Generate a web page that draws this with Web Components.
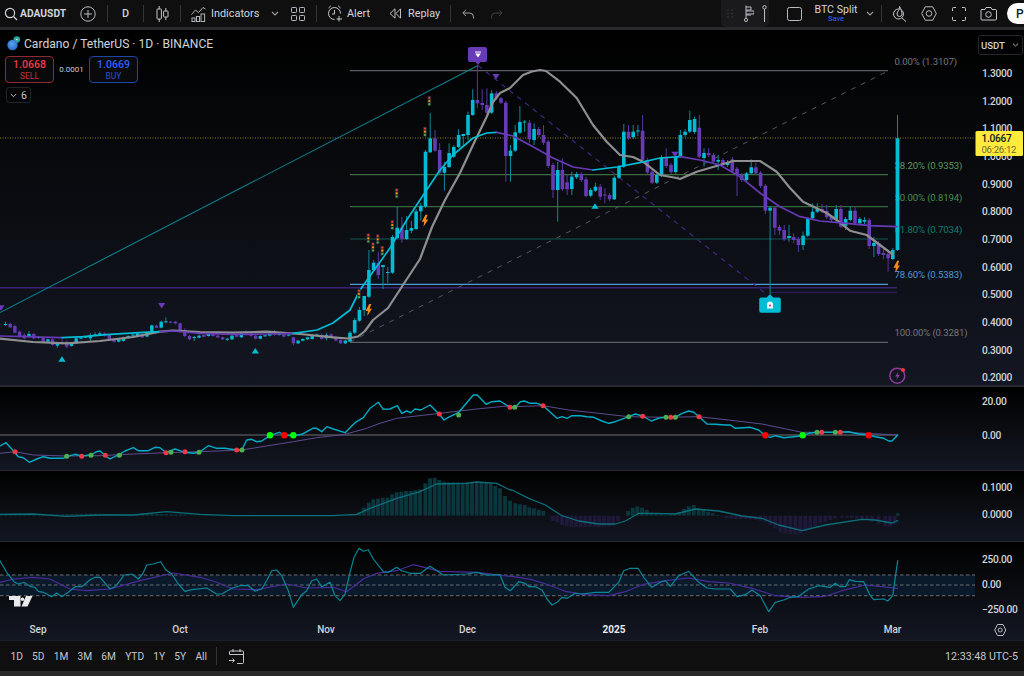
<!DOCTYPE html>
<html><head><meta charset="utf-8"><title>ADAUSDT</title>
<style>
html,body{margin:0;padding:0;background:#000;overflow:hidden;width:1024px;height:676px}
body{font-family:Roboto,"Liberation Sans",sans-serif;color:#d1d4dc}
tv-tool svg,tv-chart-legend svg{display:block}
</style></head><body>
<tv-app>
  <tv-toolbar>
    <tv-tool w="75" pl="4" bold><svg width="14" height="14" viewBox="0 0 14 14" fill="none" stroke="#d1d4dc" stroke-width="1.2"><circle cx="6" cy="6" r="4.6"/><path d="M9.5 9.5 13 13"/></svg><span slot="label" style="margin-left:2px">ADAUSDT</span></tv-tool>
    <tv-tool w="26"><svg width="16" height="16" viewBox="0 0 16 16" fill="none" stroke="#b8bbc2" stroke-width="1"><circle cx="8" cy="8" r="7.2"/><path d="M8 4v8M4 8h8"/></svg></tv-tool>
    <tv-sep ml="6"></tv-sep>
    <tv-tool w="35"><span slot="label" style="margin:0;font-weight:500">D</span></tv-tool>
    <tv-sep></tv-sep>
    <tv-tool w="36"><svg width="13" height="16" viewBox="0 0 13 16" fill="none" stroke="#c4c7ce" stroke-width="1"><path d="M3.2 0v3M3.2 13v3M9.8 2v3M9.8 11v3"/><rect x="1" y="3" width="4.4" height="10" rx=".6"/><rect x="7.6" y="5" width="4.4" height="6" rx=".6"/></svg></tv-tool>
    <tv-sep></tv-sep>
    <tv-tool w="84" pl="10"><svg width="15" height="16" viewBox="0 0 15 16" fill="none" stroke="#b0b3ba" stroke-width="1"><path d="M.5 8.5 4.5 4 7.5 6.5 12 1.5 14.5 3"/><rect x="1" y="12" width="3" height="3.5"/><rect x="5.5" y="10.5" width="3" height="5"/><rect x="10" y="8" width="3.6" height="7.5"/></svg><span slot="label">Indicators</span></tv-tool>
    <tv-tool w="20"><svg width="8" height="5" viewBox="0 0 8 5" fill="none" stroke="#9a9da5" stroke-width="1.1"><path d="M1 1l3 3 3-3"/></svg></tv-tool>
    <tv-tool w="26"><svg width="14" height="14" viewBox="0 0 14 14" fill="none" stroke="#b8bbc2" stroke-width="1"><rect x=".5" y=".5" width="5" height="5" rx=".8"/><rect x="8.5" y=".5" width="5" height="5" rx=".8"/><rect x=".5" y="8.5" width="5" height="5" rx=".8"/><rect x="8.5" y="8.5" width="5" height="5" rx=".8"/></svg></tv-tool>
    <tv-sep ml="5"></tv-sep>
    <tv-tool w="60" pl="10"><svg width="16" height="17" viewBox="0 0 16 17" fill="none" stroke="#c4c7ce" stroke-width="1"><path d="M7.5 14.5A6 6 0 1 1 13.5 8.5"/><path d="M7.5 5v4H5M1.5 3 3.8 .8M13.5 3 11.2 .8M12 11v5.500M9.500 14H15"/></svg><span slot="label" style="margin-left:4px">Alert</span></tv-tool>
    <tv-tool w="66" pl="12"><svg width="12" height="11" viewBox="0 0 12 11" fill="none" stroke="#b8bbc2" stroke-width="1"><path d="M6 .8 1 5.500 6 10.200ZM11.500 .8 7 5.500 11.500 10.200Z"/></svg><span slot="label" style="margin-left:7px">Replay</span></tv-tool>
    <tv-sep ml="7"></tv-sep>
    <tv-tool w="34"><svg width="12" height="10" viewBox="0 0 12 10" fill="none" stroke="#a0a3aa" stroke-width="1"><path d="M4 .8.8 4 4 7M1 4h6.500a4 4 0 0 1 4 4v1.500"/></svg></tv-tool>
    <tv-tool w="24"><svg width="12" height="10" viewBox="0 0 12 10" fill="none" stroke="#3e4046" stroke-width="1"><path d="M8 .8 11.200 4 8 7M11 4H4.500a4 4 0 0 0-4 4v1.500"/></svg></tv-tool>
    <tv-draw-panel>
      <svg width="6" height="9" viewBox="0 0 6 9" fill="#3b3d42"><circle cx="1" cy="1" r=".8"/><circle cx="5" cy="1" r=".8"/><circle cx="1" cy="4.500" r=".8"/><circle cx="5" cy="4.500" r=".8"/><circle cx="1" cy="8" r=".8"/><circle cx="5" cy="8" r=".8"/></svg>
      <svg width="10" height="17" viewBox="0 0 10 17" fill="none" stroke="#b8bbc2" stroke-width="1"><path d="M2 .5V13M2 2h5v3H2M2 6h8v3H2M2 10h5"/><circle cx="2" cy="15" r="1.600"/></svg>
      <svg width="5" height="17" viewBox="0 0 5 17" fill="none" stroke="#b8bbc2" stroke-width="1"><circle cx="2.500" cy="2.300" r="1.700"/><path d="M2.500 4v13"/></svg>
    </tv-draw-panel>
    <tv-tool w="33" pl="18"><svg width="15" height="14" viewBox="0 0 15 14" fill="none" stroke="#b8bbc2" stroke-width="1"><rect x=".5" y=".5" width="14" height="13" rx="2"/></svg></tv-tool>
    <tv-layout-name><span>BTC Split</span><span slot="sub">Save</span></tv-layout-name>
    <tv-tool w="22" pl="7"><svg width="8" height="5" viewBox="0 0 8 5" fill="none" stroke="#9a9da5" stroke-width="1.1"><path d="M1 1l3 3 3-3"/></svg></tv-tool>
    <tv-sep></tv-sep>
    <tv-tool w="34"><svg width="15" height="16" viewBox="0 0 15 16" fill="none" stroke="#c4c7ce" stroke-width="1"><circle cx="6.500" cy="8" r="5"/><path d="M10 12l4 3.500"/><path d="M7.500 .5C8.500 4 5 5 5 8a2.500 2.500 0 0 0 5 0C10 6 9 3 7.500 .5Z" fill="#0f0f0f"/></svg></tv-tool>
    <tv-tool w="26"><svg width="16" height="15" viewBox="0 0 16 15" fill="none" stroke="#b8bbc2" stroke-width="1"><path d="M4.300.8h7.400L15.300 7.500 11.700 14.200H4.300L.7 7.500Z"/><circle cx="8" cy="7.500" r="2.800"/></svg></tv-tool>
    <tv-tool w="34"><svg width="14" height="14" viewBox="0 0 14 14" fill="none" stroke="#c4c7ce" stroke-width="1"><path d="M.5 4V1.500a1 1 0 0 1 1-1H4M10 .5h2.500a1 1 0 0 1 1 1V4M13.500 10v2.500a1 1 0 0 1-1 1H10M4 13.500H1.500a1 1 0 0 1-1-1V10"/></svg></tv-tool>
    <tv-tool w="24"><svg width="17" height="14" viewBox="0 0 17 14" fill="none" stroke="#c4c7ce" stroke-width="1"><path d="M1.500 2.500h3.500l1-2h5l1 2h3.500a1 1 0 0 1 1 1v8.500a1 1 0 0 1-1 1h-13.500a1 1 0 0 1-1-1V3.500a1 1 0 0 1 1-1Z"/><circle cx="8.500" cy="7.500" r="2.800"/></svg></tv-tool>
    <tv-publish>Publish</tv-publish>
  </tv-toolbar>
  <tv-main-pane>
    <tv-chart-legend>
      <svg slot="logo" width="15" height="15" viewBox="0 0 15 15"><defs><radialGradient id="cg" cx=".45" cy=".4" r=".7"><stop offset="0" stop-color="#5aa6ef"/><stop offset="1" stop-color="#1f63c4"/></radialGradient></defs><circle cx="10.800" cy="3.600" r="3.300" fill="#26a69a"/><path d="M9.500 3.200 12 2.400 11 4.600Z" fill="#e8f6f4"/><circle cx="6.500" cy="9" r="5.200" fill="url(#cg)"/></svg>
      <span slot="title">Cardano / TetherUS · 1D · BINANCE</span>
      <tv-quote slot="sell" kind="sell" price="1.0668" label="SELL"></tv-quote>
      <span slot="spread">0.0001</span>
      <tv-quote slot="buy" kind="buy" price="1.0669" label="BUY"></tv-quote>
      <tv-legend-toggle slot="toggle">6</tv-legend-toggle>
    </tv-chart-legend>
  </tv-main-pane>
  <tv-pane-sep h="2"></tv-pane-sep>
  <tv-momentum-pane></tv-momentum-pane>
  <tv-pane-sep h="1"></tv-pane-sep>
  <tv-macd-pane></tv-macd-pane>
  <tv-pane-sep h="1"></tv-pane-sep>
  <tv-cci-pane></tv-cci-pane>
  <tv-pane-sep h="1" c="#1d1f27"></tv-pane-sep>
  <tv-range-bar>
    <button>1D</button><button>5D</button><button>1M</button><button>3M</button><button>6M</button><button>YTD</button><button>1Y</button><button>5Y</button><button>All</button>
    <svg slot="cal" width="15" height="15" viewBox="0 0 15 15" fill="none" stroke="#c4c7ce" stroke-width="1"><path d="M4 0v3M11 0v3M.5 5.500h14M.5 5.500V3a1 1 0 0 1 1-1h12a1 1 0 0 1 1 1v10.500a1 1 0 0 1-1 1H8M0 11.500h5M3.500 9.500l2 2-2 2"/></svg>
    <span slot="clock">12:33:48 UTC-5</span>
  </tv-range-bar>
</tv-app>
<script>
const FONT = 'Roboto,"Liberation Sans",sans-serif';
const PANE_BG = 'linear-gradient(180deg,#000 0%,#060709 25%,#131722 100%)';
function pts(list, ox, oy){
  return list.map(p=>[(ox+p[0]/3).toFixed(1),(oy+p[1]/3).toFixed(1)].join(',')).join(' ');
}
function poly(p,c,w,extra=''){return `<polyline points="${p}" fill="none" stroke="${c}" stroke-width="${w}" stroke-linejoin="round" stroke-linecap="round" ${extra}/>`;}
function plain(list){return list.map(p=>p.join(',')).join(' ');}
function parse(s){return s.trim().split(/\s+/).map(r=>{const t=r[0];return [t,...r.slice(1).split(',').map(Number)];});}
function candle(x,t,top,bot,wt,wb,w=3.4){
  const col=t==='c'?'#00bcd4':'#673ab7', wc=t==='c'?'#078a9c':'#5b34a3';
  const h=Math.max(bot-top,1);
  return `<line x1="${x}" x2="${x}" y1="${wt}" y2="${wb}" stroke="${wc}" stroke-width="1"/><rect x="${(x-w/2).toFixed(2)}" y="${top}" width="${w}" height="${h.toFixed(1)}" fill="${col}"/>`;
}
function axisText(x,y,t,fill='#d1d4dc',size=10.2,w=500,ls=-.3){return `<text x="${x}" y="${y}" fill="${fill}" font-size="${size}" font-weight="${w}" letter-spacing="${ls}" dominant-baseline="central">${t}</text>`;}

class Base extends HTMLElement{
  constructor(){super();this.attachShadow({mode:'open'});}
  connectedCallback(){this.render&&this.render();}
}
class TvApp extends Base{render(){this.shadowRoot.innerHTML=`<style>:host{display:flex;flex-direction:column;width:1024px;height:676px;overflow:hidden;background:#2a2a2c}</style><slot></slot>`;}}
class TvToolbar extends Base{render(){this.shadowRoot.innerHTML=`<style>:host{display:flex;flex:none;align-items:center;height:27px;background:#0f0f0f;border-bottom:3px solid #2a2a2c;overflow:hidden;font-size:11px;color:#d1d4dc}</style><slot></slot>`;}}
class TvTool extends Base{render(){
  const w=this.getAttribute('w'),pl=this.getAttribute('pl');
  const left=pl!==null,b=this.hasAttribute('bold');
  this.shadowRoot.innerHTML=`<style>:host{display:flex;flex:none;align-items:center;height:27px;width:${w}px;box-sizing:border-box;justify-content:${left?'flex-start':'center'};padding-left:${left?pl:0}px;font:${b?700:400} ${b?10.300:10.900}px ${FONT};color:#d1d4dc;white-space:nowrap}
  ::slotted([slot=label]){margin-left:5px}</style><slot></slot><slot name="label"></slot>`;}}
class TvSep extends Base{render(){const m=this.getAttribute('ml')||0;this.shadowRoot.innerHTML=`<style>:host{display:block;flex:none;width:1px;height:17px;background:#33343a;margin-left:${m}px}</style>`;}}
class TvDrawPanel extends Base{render(){this.shadowRoot.innerHTML=`<style>:host{display:flex;flex:none;align-items:center;gap:8px;box-sizing:border-box;width:48px;height:27px;margin-left:212px;padding-left:6px;background:#1a1a1c;border-radius:0 0 5px 5px}::slotted(svg:nth-child(1)){margin-right:3px}</style><slot></slot>`;}}
class TvLayoutName extends Base{render(){this.shadowRoot.innerHTML=`<style>:host{display:flex;flex:none;flex-direction:column;align-items:center;width:46px;margin-left:11px;margin-top:-1px;font:400 10.600px/11px ${FONT};color:#d1d4dc;white-space:nowrap}::slotted([slot=sub]){font-size:7.500px;line-height:7px;color:#2962ff}</style><slot></slot><slot name="sub"></slot>`;}}
class TvPublish extends Base{render(){this.shadowRoot.innerHTML=`<style>:host{display:flex;flex:none;align-items:center;box-sizing:border-box;width:60px;height:21px;margin-left:7px;padding-left:9px;border-radius:11px 0 0 11px;background:#fff;color:#131722;font:500 12px ${FONT}}</style><slot></slot>`;}}

class TvChartLegend extends Base{render(){this.shadowRoot.innerHTML=`<style>
:host{position:absolute;left:5px;top:5px;display:flex;flex-direction:column;align-items:flex-start;gap:4px;font:400 12.100px ${FONT};color:#d1d4dc}
.row{display:flex;align-items:center}
.title{gap:3px;margin-left:1px;height:17px;white-space:nowrap}
.quotes{height:27px}
::slotted([slot=spread]){width:35px;text-align:center;font-size:8px;color:#c9cbd1}
</style><div class="row title"><slot name="logo"></slot><slot name="title"></slot></div>
<div class="row quotes"><slot name="sell"></slot><slot name="spread"></slot><slot name="buy"></slot></div><slot name="toggle"></slot>`;}}
class TvQuote extends Base{render(){const k=this.getAttribute('kind');const c=k==='sell'?'#f23645':'#2962ff';const b=k==='sell'?'#8f2a33':'#1e45a8';
 this.shadowRoot.innerHTML=`<style>:host{display:flex;flex-direction:column;align-items:center;justify-content:center;box-sizing:border-box;width:49px;height:27px;border:1px solid ${b};border-radius:4px;color:${c};background:#0a0a0d;font:500 10.500px/12px ${FONT}}.l{font-weight:400;font-size:8.500px;line-height:10px;opacity:.8}</style><span>${this.getAttribute('price')}</span><span class="l">${this.getAttribute('label')}</span>`;}}
class TvLegendToggle extends Base{render(){this.shadowRoot.innerHTML=`<style>:host{display:flex;align-items:center;justify-content:center;gap:4px;box-sizing:border-box;width:25px;height:16px;margin-left:1px;border:1px solid #232428;border-radius:3px;font:400 10.500px ${FONT};color:#c4c7ce}</style><svg width="7" height="5" viewBox="0 0 7 5" fill="none" stroke="#c4c7ce" stroke-width="1"><path d="M.8 1l2.700 2.700L6.200 1"/></svg><slot></slot>`;}}

const PRE=parse(`c132,134,125,138 p132,142,128,144 p138,158,134,160 p155,168,152,172 p165,175,160,178 c162,168,153,172 p162,175,158,178 c171,173,168,176 p172,185,170,187 c178,185,176,188 p178,195,175,197 c190,197,186,203 p187,189,178,195 p186,200,182,205 c188,198,186,200 c175,190,173,192 c172,176,170,178 c170,172,168,175 c165,175,160,183 c163,166,157,170 c160,165,155,168 p160,165,157,170 p165,178,163,181 p178,185,175,188 c178,185,176,187 c173,183,170,185 c168,173,166,176 c164,166,160,170 c160,168,157,172 p162,172,159,174 c157,170,155,172 c136,157,134,160 p137,143,134,145 c125,143,122,145 c124,126,112,130 p125,127,123,130 p125,130,123,133 p130,150,128,152 p150,168,145,172 p168,178,165,181 c171,173,168,183 c167,173,164,175 p165,170,163,172 c162,168,160,170 p160,168,156,170 p167,172,165,174 p172,178,170,180 c176,178,173,183 c167,178,165,180 p162,170,159,172 c156,172,154,174 p155,165,151,167 p160,168,158,170 p167,176,165,178 c168,176,166,178 c166,168,164,170 c155,167,153,169 p155,165,150,167 c158,165,156,167 p158,170,155,172 c164,166,160,169 p172,190,170,196 c182,190,180,192 c177,182,175,184 c172,178,170,180 c165,177,163,179 c164,166,160,168 p165,177,160,179 c165,175,158,181 p163,172,160,174 p172,182,170,184 p180,190,178,192 c182,190,180,192`);
const MAIN=parse(`c332.7,341.7,331,342 c320,332.7,318,334 c310,320.7,307,322 c296,310,306,316 c270,296.7,250,298 c262.7,270,260,272 p263,275,251.7,279 c265,267,265,289 c272,273,267,283 c237,272.7,235,274 c227.700,238,206.7,239 p227.7,239,217,242.7 c230,239,216,240 c228,230.7,220.7,233.300 c211.3,229,209,230 c205.7,211.3,203,220.700 c151.700,206.7,150,208 c138.3,152.3,113,153 p138.3,150.7,130,151.700 p150,172.7,143.300,174 c167,172.7,161.700,190.7 c153,167,143.300,168 c147,156.7,145,158 c135,147,129.300,148 c134,136,134,145 c115,135,111.700,140 c100,115,89.3,116 p100,103.3,65,108.300 p103,105,89.300,110 p105,112.7,88.300,114 c93.3,112.7,90,114 p93.3,98.3,91,100 p98.3,102.7,97,104 p102.7,156,101,181.7 c150.7,156,145,181.7 c132.3,150.7,125,152 c122,132.7,106,134 c121.500,122.500,120,131.700 p122.7,139.3,120,143.300 c129,140,123.300,145 p129,135,127,137 p135,142.7,125,145 p141.7,166,140,168 p165,190,163,198 c170,190,161.700,221.7 p170,189.3,158.300,191 p182.3,189.3,175,195 c176.7,189,171.700,195 c174,177.3,172,179 p174,180,172,182 p179.3,196,176.700,197.300 c190,195.7,188,197 c186.7,190.7,182.700,192 p186.7,196.7,184,200 p194.500,195.500,188.300,203.300 p195,199.3,193,201 c177.7,199.3,176,200 c166.7,177.7,165,179 c131.7,166.7,124,168 p131.7,138.3,125,140 c131.7,137.3,125,139 c130.500,131.500,125,136 p130.7,160,115,162 p160,172.3,158,174 p171.7,182.7,170,184 c175,182.7,172,184 c157.3,175,155,177 p157.3,166,148.300,168 p165,172,163,174 c156.7,172,155,174 c135,156.700,130,158 c131.7,135,129,137 c120,131.700,110.7,133 c119,132,116.700,134 p127.7,156.7,115,158 c153,158,148.300,166.700 p153,155,148.300,157 p155,161.700,153,163 c160,161.700,155,170 p160,165,158,167 c162.3,165,160,167 p159.3,170.7,157,172 p168.7,175,167,196 p175,180,173,182 c173.3,180,172,181 c167.3,173.3,159.300,175 p167.3,173.3,162.700,175 p172.7,186,171,188 p185.7,210.7,184,214 c207.7,210.7,206,295 p207.7,227.7,206,235 p227,230.7,225,235 p230,239.3,225,241 c236,238,225,241.700 p237,240,233.300,243.300 p239,245,237,252 c235.700,245,231.700,250 c218.3,235.700,217,237 c211.7,218.3,203.300,219.700 c209,211.7,203.300,213 p209,211,204,213 p211,217.3,205,219 p216,220,215,222 c209,220,205,222 p209,226.7,205,228 c219,225.7,217,230 c210.7,220,206,221.300 p210.7,223.3,206,225 c219,223.3,217,225 c220,221.700,217,224 p220,246,218,249 c243,246,237,257 p243,254,241,256 p253,255,248.300,259.300 p254,258.3,252,271.7 c250,259,248,260 c138.3,250,115,251`);
const MA_GRAY=[[0,338.7],[33,342],[67,343.3],[100,341],[133,337],[160,331.7],[173,330.7],[200,332],[233,332.700],[267,331.7],[300,334],[333,337.3],[348,338.5],[358,336.5],[365,331],[373,320],[388,308],[403,285],[420,259],[432,227],[445,200],[460,173],[473,145],[486.7,116.7],[493,102],[500,93],[510,88],[523,75],[532,71.5],[540,70],[546,71],[560,81.7],[576.7,98],[593,125],[606.7,141.700],[620,155],[633,157],[643,161.700],[660,175],[676.7,178],[680,179],[696.7,171.7],[713,167],[733,161],[760,161],[776.7,171.7],[790,188],[803,201.7],[826.7,213],[836.7,220],[850,230.7],[866.7,235],[880,245],[892,254]];
const MA_A=[[0,336],[20,336.500],[62,337.700]];
const MA_B=[[62,337.700],[83,336.7],[110,334.3],[143,332.3],[160,331.7]];
const MA_C=[[160,331.7],[173,331],[200,333.3],[233,334.3],[267,334],[293,333.3]];
const MA_D=[[293,333.3],[317,330],[333,323],[350,310],[360,290],[373,271.7],[390,248],[406.7,220],[420,200],[440,170],[453,155],[473,138],[486.7,133],[496.7,132.3]];
const MA_E=[[496.7,132.3],[513,136],[533,146.7],[553,158],[573,167],[593,170]];
const MA_F=[[593,170],[616.7,167],[640,162.7],[660,158],[680,156.7]];
const MA_G=[[680,156.7],[700,160],[720,165],[740,176.7],[760,193],[780,206.7],[800,216.7],[820,221],[846.7,223.3],[870,225.7],[897,226.7]];
function traffic(x,y){return `<rect x="${x-1.8}" y="${y-5}" width="3.600" height="10" rx="1" fill="#2d2d2f"/><circle cx="${x}" cy="${y-3.2}" r="1.100" fill="#f23645"/><circle cx="${x}" cy="${y}" r="1.100" fill="#ff9800"/><circle cx="${x}" cy="${y+3.200}" r="1.100" fill="#4caf50"/>`;}
function bolt(x,y){return `<path d="M${x+.5} ${y-6} L${x-3.200} ${y+1} H${x-.8} L${x-1.500} ${y+6} L${x+3.200} ${y-1.200} H${x+.8} L${x+2.600} ${y-6}Z" fill="#fb8c1c"/>`;}
function tri(x,y,up,c){const s=3.600,h=5.600;return up?`<path d="M${x} ${y-h/2}L${x+s} ${y+h/2}H${x-s}Z" fill="${c}"/>`:`<path d="M${x-s} ${y-h/2}H${x+s}L${x} ${y+h/2}Z" fill="${c}"/>`;}

class TvMainPane extends Base{render(){
  let s='';
  const fib=[[70.7,'#5d5e65','0.00% (1.3107)','#75767d',61],[174.7,'#3e6d40','38.20% (0.9353)','#5c9a5f',165],[206.7,'#35693a','50.00% (0.8194)','#4a8c50',197],[239,'#0e5a52','61.80% (0.7034)','#0f7d72',229],[284.3,'#4e9ad6','78.60% (0.5383)','#4f98d4',274],[342.3,'#5d5e65','100.00% (0.3281)','#75767d',332]];
  fib.forEach(f=>{s+=`<line x1="350" x2="888" y1="${f[0]}" y2="${f[0]}" stroke="${f[1]}" stroke-width="1.200"/>`;});
  fib.forEach(f=>{s+=axisText(894.5,f[4],f[2],f[3],9.600,400,-.12);});
  s+=`<line x1="0" x2="897" y1="287.700" y2="287.700" stroke="#3a2272" stroke-width="1.400"/><line x1="770" x2="897" y1="292.300" y2="292.300" stroke="#3a2272" stroke-width="1.100"/>`;
  s+=`<line x1="0" x2="975" y1="138" y2="138" stroke="#8d7d1f" stroke-width="1" stroke-dasharray="1 1.500"/>`;
  s+=`<line x1="0" x2="478" y1="312.500" y2="65.500" stroke="#0a7f8c" stroke-width="1.100"/>`;
  s+=`<line x1="350" x2="888" y1="342" y2="71" stroke="#55565c" stroke-width="1" stroke-dasharray="5 6"/>`;
  s+=`<line x1="478" x2="770" y1="65.500" y2="297" stroke="#46288c" stroke-width="1.100" stroke-dasharray="5 5"/>`;
  const n=PRE.length;
  PRE.forEach((c,i)=>{const x=(350-4.72*(n-i)).toFixed(1);s+=candle(x,c[0],280+c[1]/3,280+c[2]/3,280+c[3]/3,280+c[4]/3);});
  MAIN.forEach((c,i)=>{const x=(350+4.72*i).toFixed(1);s+=candle(x,c[0],c[1],c[2],c[3],c[4],i===116?3.8:3.6);});
  s+=poly(plain(MA_GRAY),'#8f8f91',2.200);
  [[MA_A,'#673ab7'],[MA_B,'#00bcd4'],[MA_C,'#673ab7'],[MA_D,'#00bcd4'],[MA_E,'#673ab7'],[MA_F,'#00bcd4'],[MA_G,'#673ab7']].forEach(([p,c])=>{s+=poly(plain(p),c,1.700);});
  [[429.300,101],[425,131.700],[396.7,193.300],[392.300,225],[368.300,238.300],[373,247.300],[377.700,239.300],[382.300,250.700],[359,294]].forEach(p=>s+=traffic(p[0],p[1]));
  [[425,220.700],[368.700,310],[896.700,266.700]].forEach(p=>s+=bolt(p[0],p[1]));
  [[496,76.700,0],[161.700,305.700,0],[1,308,0],[675,154.500,0]].forEach(p=>s+=tri(p[0],p[1],false,'#673ab7'));
  [[62,359],[255.300,350.700],[595,206]].forEach(p=>s+=tri(p[0],p[1],true,'#00bcd4'));
  s+=`<path d="M470 47h15a2 2 0 0 1 2 2v11a2 2 0 0 1-2 2h-4.500L478 65l-2.500-3H470a2 2 0 0 1-2-2V49a2 2 0 0 1 2-2Z" fill="#673ab7"/><path d="M475 51.500h6v1h-6zM475.200 53.500h5.600L478 57.500Z" fill="#fff"/>`;
  s+=`<path d="M770 294.500l3.500 3h5.300a2 2 0 0 1 2 2v11.200a2 2 0 0 1-2 2h-17.600a2 2 0 0 1-2-2V299.500a2 2 0 0 1 2-2h5.300Z" fill="#00bcd4"/><path d="M770 301.500a3 3 0 0 1 3 3v4h-6v-4a3 3 0 0 1 3-3Z" fill="#e8fbff"/><circle cx="770" cy="305.500" r="1" fill="#e91e8c"/>`;
  s+=`<circle cx="897.300" cy="375.700" r="7.500" fill="none" stroke="#8e3a9e" stroke-width="1.500"/><path d="M898.500 371.500l-3.500 5h2.300l-1.200 3.800 3.700-5.200h-2.300Z" fill="#8e3a9e"/><circle cx="903" cy="370" r="2" fill="#f23645"/>`;
  const ax=[['1.3000',73],['1.2000',101],['1.1000',128.500],['1.0000',156.500],['0.9000',184],['0.8000',211.500],['0.7000',239],['0.6000',267],['0.5000',294.500],['0.4000',322],['0.3000',350],['0.2000',377]];
  ax.forEach(a=>s+=axisText(982,a[1],a[0]));
  s+=`<rect x="975.500" y="131" width="47.500" height="25" rx="1.500" fill="#ffeb3b"/>`+axisText(981.500,138,'1.0667','#131722',10.200,500)+axisText(981.500,149.500,'06:26:12','#6b6830',9.600,400,-.3);
  this.shadowRoot.innerHTML=`<style>:host{display:block;position:relative;flex:none;height:355px;background:${PANE_BG};overflow:hidden}
  svg.c{display:block;font-family:${FONT}}
  .usdt{position:absolute;left:978px;top:5px;box-sizing:border-box;width:45px;height:20px;display:flex;align-items:center;justify-content:space-between;padding:0 3px 0 2px;border:1px solid #26272c;border-radius:3px;font:500 9.600px ${FONT};color:#d1d4dc}</style>
  <svg class="c" width="1024" height="355" viewBox="0 30 1024 355">${s}</svg><slot></slot>
  <div class="usdt"><span>USDT</span><svg width="7" height="4" viewBox="0 0 7 4" fill="none" stroke="#b0b3ba" stroke-width="1"><path d="M1 .7 3.500 3 6 .7"/></svg></div>`;
}}
class TvPaneSep extends Base{render(){this.shadowRoot.innerHTML=`<style>:host{display:block;flex:none;height:${this.getAttribute('h')}px;background:${this.getAttribute('c')||'#272a33'}}</style>`;}}

class TvMomentumPane extends Base{render(){
 const a=[[0,183],[18,173],[38,195],[55,215],[70,218],[88,232],[110,222],[130,215],[150,220],[170,220],[190,220],[200,215],[225,208],[245,213],[272,210],[290,200],[300,198],[316,212],[330,222],[358,208],[375,198],[400,188],[415,197],[445,197],[465,187],[480,188],[497,202],[525,192],[555,202],[580,205],[598,202],[625,182],[650,190],[675,190],[710,195],[725,195],[740,165],[755,163],[770,170],[785,168],[810,152],[838,142],[853,150],[880,152],[905,148],[938,130],[950,130],[965,140],[980,125],[1000,132],[1035,143],[1065,113],[1090,98],[1110,70],[1135,52],[1150,73],[1170,72],[1192,62],[1205,85],[1220,78],[1232,83],[1245,72],[1262,75],[1290,60],[1318,88],[1332,105],[1345,97],[1375,83],[1420,30],[1432,30],[1458,58],[1475,50],[1500,48],[1530,67]];
 const b=[[8,68],[25,50],[37,48],[55,55],[75,55],[94,62],[115,82],[135,100],[150,95],[165,100],[180,92],[205,92],[225,95],[245,97],[270,108],[290,115],[310,110],[350,95],[370,87],[392,93],[418,108],[445,98],[462,97],[476,97],[490,97],[510,85],[530,78],[545,82],[561,95],[585,117],[610,118],[640,120],[655,120],[670,130],[695,128],[715,127],[740,135],[760,152],[775,157],[790,152],[815,158],[845,155],[872,152],[890,145],[915,142],[930,142],[970,142],[1010,140],[1040,147],[1070,150],[1090,155],[1115,160],[1130,168],[1140,168],[1157,150]];
 const sa=[[0,205],[45,200],[100,210],[200,213],[300,212],[400,207],[500,203],[600,200],[725,195],[800,183],[880,170],[950,158],[1035,148],[1100,130],[1140,115],[1190,100],[1320,85],[1430,72],[1530,62]];
 const sb=[[0,65],[94,62],[170,75],[260,85],[350,95],[460,97],[560,95],[650,105],[750,117],[870,142],[1000,142],[1157,150]];
 let s=`<line x1="0" x2="897.500" y1="435" y2="435" stroke="#6f7074" stroke-width="1"/>`;
 s+=poly(pts(sa,0,385)+' '+pts(sb,512,385),'#5d4a8e',1);
 s+=poly(pts(a,0,385)+' '+pts(b,512,385),'#00acc8',1.400);
 const dot=(x,y,c,r=2.500)=>`<circle cx="${x.toFixed(1)}" cy="${y.toFixed(1)}" r="${r}" fill="${c}"/>`;
 [[45,200],[245,214],[316,211],[498,203],[555,200],[710,195],[1318,87],[1530,67]].forEach(d=>s+=dot(d[0]/3,385+d[1]/3,'#f23645'));
 [[200,214],[273,211],[358,211],[513,202],[597,202],[726,195],[1376,90]].forEach(d=>s+=dot(d[0]/3,385+d[1]/3,'#4caf50'));
 [[93,62],[392,94],[476,97],[561,95],[929,142],[985,142]].forEach(d=>s+=dot(512+d[0]/3,385+d[1]/3,'#f23645'));
 [[8,67],[350,95],[462,97],[490,97],[915,142],[970,142]].forEach(d=>s+=dot(512+d[0]/3,385+d[1]/3,'#4caf50'));
 [[810,151],[880,151]].forEach(d=>s+=dot(d[0]/3,385+d[1]/3,'#00ff00',3.200));
 s+=dot(853/3,385+151/3,'#ff0000',3.200);
 [[760,151],[1070,151]].forEach(d=>s+=dot(512+d[0]/3,385+d[1]/3,'#ff0000',3.200));
 s+=dot(512+872/3,385+151/3,'#00ff00',3.200);
 s+=axisText(982,401,'20.00')+axisText(982,435.500,'0.00');
 this.shadowRoot.innerHTML=`<style>:host{display:block;flex:none;height:83px;background:${PANE_BG};overflow:hidden}svg{display:block;font-family:${FONT}}</style><svg width="1024" height="83" viewBox="0 387 1024 83">${s}</svg>`;
}}
class TvMacdPane extends Base{render(){
 const h1=[];for(let i=0;i<75;i++){h1.push([3+i*14.16,i<5?386:i<30?388+Math.sin(i/4)*2:(i<40?386+ (i-30)*.3:(i<74?391:389))]);}
 const h2=[[1064,388],[1078,382],[1092,368],[1106,353],[1120,343],[1134,341],[1148,338],[1162,338],[1176,328],[1190,322],[1204,320],[1218,318],[1232,318],[1246,316],[1260,313],[1276,295],[1290,280],[1304,278],[1318,285],[1332,290],[1346,292],[1360,292],[1374,292],[1388,292],[1402,291],[1416,290],[1430,290],[1444,291],[1458,292],[1472,295],[1486,303],[1500,310],[1515,333],[1530,347]];
 const h3=[[10,355],[24,358],[38,360],[52,367],[66,370],[80,374],[94,378],[122,408],[136,412],[150,420],[164,424],[178,426],[192,426],[206,426],[220,426],[234,426],[248,426],[262,426],[276,425],[290,424],[304,422],[318,408],[348,378],[362,368],[376,364],[390,368],[404,375],[418,383],[432,386],[446,388],[460,390],[474,390],[488,388],[502,382],[516,372],[530,364],[545,360],[560,370],[574,375],[588,380],[602,385],[616,390],[630,395],[644,400],[658,401],[672,402],[686,402],[700,402],[715,403],[730,405],[745,407],[760,410],[775,420],[790,430],[805,442],[820,445],[835,447],[850,449],[865,447],[880,440],[895,432],[910,423],[925,415],[940,410],[955,405],[970,400],[990,398],[1005,398],[1020,399],[1035,400],[1050,402],[1065,405],[1080,410],[1100,418],[1120,424],[1134,424],[1148,418],[1157,385]];
 const base=385+392/3;let s='';
 const bar=(x,y)=>{const top=Math.min(y,base),h=Math.abs(y-base);const up=y<base;return `<rect x="${(x-1.900).toFixed(1)}" y="${top.toFixed(1)}" width="3.800" height="${h.toFixed(1)}" fill="${up?'#0a363d':'#1f1939'}"/>`;};
 h1.forEach(b=>s+=bar(b[0]/3,385+b[1]/3));h2.forEach(b=>s+=bar(b[0]/3,385+b[1]/3));h3.forEach(b=>s+=bar(512+b[0]/3,385+b[1]/3));
 const la=[[0,388],[100,387],[200,394],[300,390],[400,390],[500,380],[600,388],[700,392],[1000,392],[1070,388],[1110,370],[1190,340],[1260,320],[1310,297],[1400,295],[1430,291],[1490,295],[1530,315]];
 const lb=[[0,315],[50,340],[100,360],[150,392],[200,408],[260,417],[310,417],[340,408],[380,385],[430,385],[490,387],[550,372],[620,378],[690,393],[750,400],[800,420],[870,437],[940,420],[1050,403],[1090,405],[1140,414],[1157,407]];
 s+=poly(pts(la,0,385)+' '+pts(lb,512,385),'#0b6f7a',1.300);
 s+=axisText(982,487,'0.1000')+axisText(982,514,'0.0000');
 this.shadowRoot.innerHTML=`<style>:host{display:block;flex:none;height:70px;background:${PANE_BG};overflow:hidden}svg{display:block;font-family:${FONT}}</style><svg width="1024" height="70" viewBox="0 471 1024 70">${s}</svg>`;
}}
class TvCciPane extends Base{render(){
 const a=[[0,65],[20,100],[42,128],[55,135],[72,130],[90,142],[105,145],[115,157],[130,160],[155,173],[170,162],[185,173],[205,160],[225,143],[245,143],[270,122],[285,115],[300,115],[330,150],[345,143],[360,125],[372,108],[395,105],[415,120],[428,105],[440,78],[460,75],[482,68],[497,92],[515,105],[535,135],[555,157],[575,152],[620,147],[650,165],[665,165],[695,148],[720,140],[745,140],[765,157],[785,150],[800,125],[815,95],[830,93],[845,110],[865,155],[880,205],[905,167],[920,155],[935,125],[950,120],[965,143],[990,130],[1005,170],[1020,185],[1035,165],[1050,100],[1062,55],[1077,28],[1090,37],[1105,32],[1120,60],[1150,98],[1165,100],[1190,85],[1205,95],[1230,103],[1262,103],[1290,82],[1330,108],[1400,105],[1430,100],[1460,108],[1500,107],[1515,145],[1530,155]];
 const b=[[0,150],[20,128],[40,133],[50,143],[70,143],[90,153],[105,180],[120,198],[135,190],[150,175],[165,178],[190,163],[210,165],[250,160],[290,160],[320,130],[335,95],[355,88],[378,88],[395,115],[420,145],[445,130],[460,125],[475,142],[500,110],[530,97],[560,130],[585,147],[610,150],[655,150],[675,173],[700,167],[720,153],[745,170],[770,218],[790,190],[815,183],[835,175],[860,172],[890,150],[920,140],[955,145],[970,133],[985,143],[1000,143],[1012,122],[1030,127],[1055,128],[1075,170],[1085,182],[1115,180],[1127,186],[1142,170],[1157,65]];
 const sa=[[0,130],[40,120],[100,115],[150,120],[210,150],[260,155],[330,150],[420,125],[520,102],[600,115],[650,130],[700,150],[770,152],[860,135],[920,147],[1000,145],[1040,158],[1090,120],[1130,103],[1190,95],[1240,77],[1320,97],[1430,100],[1530,112]];
 const sb=[[0,112],[60,122],[110,138],[160,157],[220,167],[290,170],[340,158],[390,137],[460,125],[530,117],[590,128],[650,132],[720,148],[790,170],[870,175],[940,172],[990,155],[1060,138],[1157,148]];
 let s=`<rect x="0" y="576" width="975" height="20.700" fill="#0b1a2a"/>`;
 [576,586,596.700].forEach(y=>s+=`<line x1="0" x2="975" y1="${y}" y2="${y}" stroke="#6d6e73" stroke-width="1" stroke-dasharray="3.500 2.500"/>`);
 s+=poly(pts(sa,0,540)+' '+pts(sb,512,540),'#4b2b9c',1.200);
 s+=poly(pts(a,0,540)+' '+pts(b,512,540),'#07879a',1.200);
 s+=axisText(982,560.700,'250.00')+axisText(982,585.700,'0.00')+axisText(982,610.700,'−250.00');
 [['Sep',38],['Oct',180],['Nov',326],['Dec',467.500],['2025',614],['Feb',760],['Mar',892.500]].forEach(t=>s+=`<text x="${t[1]}" y="630.500" text-anchor="middle" dominant-baseline="central" fill="${t[0]==='2025'?'#e8eaef':'#d1d4dc'}" font-size="10" font-weight="${t[0]==='2025'?700:500}">${t[0]}</text>`);
 s+=`<path d="M9 597h11.500v10.500H14V601h-5Z M22.500 598.500a1.800 1.800 0 1 1 0 3.600 1.800 1.800 0 0 1 0-3.600Z M26 597h6.500l-5 10.500H21.500Z" fill="#e9e9ea"/>`;
 s+=`<path d="M997.500 625.500h5.500l2.800 5.500-2.800 5.500h-5.500l-2.800-5.500Z" fill="none" stroke="#b8bbc2"/><circle cx="1000.200" cy="631" r="2" fill="none" stroke="#b8bbc2"/>`;
 this.shadowRoot.innerHTML=`<style>:host{display:block;flex:none;height:98px;background:${PANE_BG};overflow:hidden}svg{display:block;font-family:${FONT}}</style><svg width="1024" height="98" viewBox="0 543 1024 98">${s}</svg>`;
}}
class TvRangeBar extends Base{render(){
 this.shadowRoot.innerHTML=`<style>:host{display:flex;flex:none;align-items:center;box-sizing:border-box;height:30px;background:#0f0f0f;padding-left:10.500px;font:400 10px ${FONT};color:#c4c7ce;margin-bottom:4px}
 ::slotted(button){all:unset;font:400 10.200px ${FONT};color:#c4c7ce;margin-right:9.200px;white-space:nowrap}
 .sep{width:1px;height:18px;background:#33343a;margin:0 11.500px 0 0}
 .sp{flex:1}
 ::slotted([slot=clock]){margin-right:6px;color:#c4c7ce;font-size:10.700px}
 </style><slot></slot><div class="sep"></div><slot name="cal"></slot><div class="sp"></div><slot name="clock"></slot>`;
}}
[['tv-app',TvApp],['tv-toolbar',TvToolbar],['tv-tool',TvTool],['tv-sep',TvSep],['tv-draw-panel',TvDrawPanel],['tv-layout-name',TvLayoutName],['tv-publish',TvPublish],['tv-chart-legend',TvChartLegend],['tv-quote',TvQuote],['tv-legend-toggle',TvLegendToggle],['tv-main-pane',TvMainPane],['tv-pane-sep',TvPaneSep],['tv-momentum-pane',TvMomentumPane],['tv-macd-pane',TvMacdPane],['tv-cci-pane',TvCciPane],['tv-range-bar',TvRangeBar]].forEach(([n,c])=>customElements.define(n,c));
</script>
</body></html>
